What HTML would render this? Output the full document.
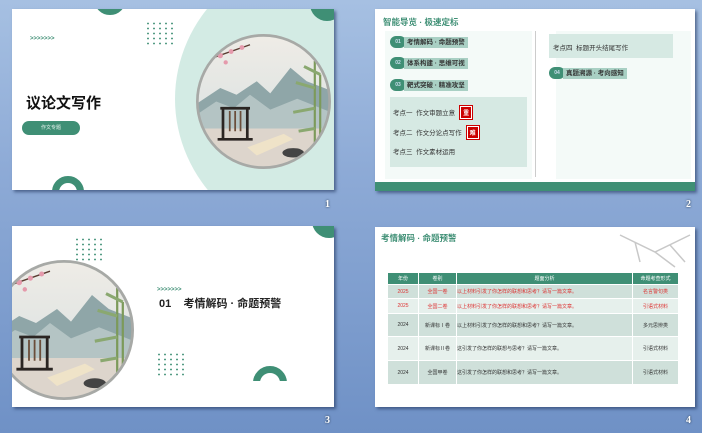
<!DOCTYPE html><html><head><meta charset="utf-8"><style>
*{margin:0;padding:0;box-sizing:border-box}
body{width:702px;height:433px;overflow:hidden;position:relative;background:linear-gradient(180deg,#a6c0e2 0%,#8daad6 40%,#6f91c6 100%);font-family:"Liberation Sans","Noto Sans CJK SC",sans-serif}
.s{position:absolute;background:#fff;overflow:hidden;box-shadow:2px 2px 3px rgba(30,50,90,.6)}
.a{position:absolute}
.n{position:absolute;color:#fff;font:bold 10px "Liberation Serif",serif;text-shadow:0 0 2px #234}
.arr{color:#3f8f75;font-size:6px;letter-spacing:0px;font-weight:bold}
.dots{background-image:radial-gradient(circle,#3f8f75 0.7px,transparent 1.1px);background-size:6px 5px}
.ring{border-radius:50%;border:7px solid #3f8f75}
.pill{display:flex;align-items:center;position:absolute}
.pill .c{width:16px;height:12px;border-radius:6px;background:#3f8f75;color:#cde;font-size:5px;line-height:12px;text-align:center;font-weight:bold}
.pill .t{background:#a9d0c4;font-size:6.5px;font-weight:bold;color:#333;padding:2px 3px;margin-left:-2px;height:11px;line-height:7px}
.kd{position:absolute;font-size:6.5px;color:#333}
.tag{display:inline-block;background:#c00;color:#fff;font-size:6px;padding:1px 2px;margin-left:5px;font-weight:bold;border:1px solid #fff;outline:1px solid #c00}
table{position:absolute;border-collapse:collapse;font-size:5px}
td{border:1px solid #fff;text-align:center;color:#333}
</style></head><body>
<svg width="0" height="0" style="position:absolute"><defs>
<clipPath id="cc"><circle cx="50" cy="50" r="49"/></clipPath>
<linearGradient id="sky" x1="0" y1="0" x2="0" y2="1"><stop offset="0" stop-color="#efece6"/><stop offset=".6" stop-color="#dfe4e3"/><stop offset="1" stop-color="#e2dcd3"/></linearGradient>
<symbol id="pt" viewBox="0 0 100 100"><g clip-path="url(#cc)">
<rect width="100" height="100" fill="url(#sky)"/>
<path d="M0 52 L18 40 L30 45 L45 35 L55 44 L70 25 L82 35 L100 42 L100 70 L0 70Z" fill="#8fa6a8"/>
<path d="M0 60 L15 50 L28 55 L40 45 L55 56 L75 48 L100 58 L100 75 L0 75Z" fill="#b4c4c4"/>
<rect y="70" width="100" height="30" fill="#ddd5cc"/>
<path d="M18 55 H40 M20 55 V78 M38 55 V78 M16 78 H42" stroke="#2b2522" stroke-width="2" fill="none"/>
<path d="M25 57V72M29 57V72M33 57V72" stroke="#6b4e3a" stroke-width="1.3"/>
<path d="M38 84 L65 74 L72 78 L45 90Z" fill="#efe3c8"/>
<ellipse cx="72" cy="88" rx="8" ry="3.5" fill="#444"/>
<path d="M0 22 Q20 15 40 8" stroke="#5a3b30" stroke-width="1" fill="none"/>
<g fill="#e59aac"><circle cx="10" cy="20" r="2"/><circle cx="18" cy="16" r="2"/><circle cx="26" cy="13" r="1.8"/><circle cx="34" cy="10" r="1.8"/><circle cx="6" cy="27" r="1.7"/><circle cx="22" cy="21" r="1.6"/></g>
<path d="M88 20 V85 M92 30 V85" stroke="#7c9a5a" stroke-width="1.6"/>
<path d="M88 40 L74 36 M88 55 L72 58 M92 30 L80 24 M88 70 L76 72" stroke="#8aa870" stroke-width="2.2"/>
</g><circle cx="50" cy="50" r="49" fill="none" stroke="#a7a9a6" stroke-width="2"/></symbol>
</defs></svg>

<!-- Slide 1 -->
<div class="s" style="left:12px;top:9px;width:322px;height:181px">
 <div class="a" style="left:163px;top:-60px;width:320px;height:300px;border-radius:50%;background:#d3ebe4"></div>
 <svg class="a" style="left:184px;top:25px" width="135" height="135"><use href="#pt"/></svg>
 <div class="a ring" style="left:82px;top:-26px;width:32px;height:32px"></div>
 <div class="a ring" style="left:298px;top:-22px;width:34px;height:34px;border:none;background:#3f8f75"></div>
 <div class="a ring" style="left:40px;top:167px;width:32px;height:32px"></div>
 <div class="a dots" style="left:133px;top:12px;width:30px;height:25px"></div>
 <div class="a arr" style="left:18px;top:27px">&gt;&gt;&gt;&gt;&gt;&gt;&gt;</div>
 <div class="a" style="left:14px;top:83px;font-size:15px;font-weight:bold;color:#111">议论文写作</div>
 <div class="a" style="left:10px;top:112px;width:58px;height:14px;border-radius:7px;background:#3f8f75;color:#e8f4ef;font-size:5px;line-height:14px;text-align:center">作文专题</div>
</div>
<div class="n" style="left:325px;top:199px">1</div>

<!-- Slide 2 -->
<div class="s" style="left:375px;top:9px;width:320px;height:182px">
 <div class="a" style="left:8px;top:7px;font-size:8.5px;font-weight:bold;color:#3f8f75">智能导览 · 极速定标</div>
 <div class="a" style="left:10px;top:22px;width:147px;height:148px;background:#f4faf8"></div>
 <div class="a" style="left:181px;top:22px;width:135px;height:148px;background:#f4faf8"></div>
 <div class="a" style="left:160px;top:22px;width:1px;height:146px;background:#ccc"></div>
 <div class="pill" style="left:15px;top:27px"><div class="c">01</div><div class="t">考情解码 · 命题预警</div></div>
 <div class="pill" style="left:15px;top:48px"><div class="c">02</div><div class="t">体系构建 · 思维可视</div></div>
 <div class="pill" style="left:15px;top:70px"><div class="c">03</div><div class="t">靶式突破 · 精准攻坚</div></div>
 <div class="a" style="left:15px;top:88px;width:137px;height:70px;background:#d6e9e3"></div>
 <div class="kd" style="left:18px;top:97px">考点一&nbsp;&nbsp;作文审题立意<span class="tag">重</span></div>
 <div class="kd" style="left:18px;top:117px">考点二&nbsp;&nbsp;作文分论点写作<span class="tag">难</span></div>
 <div class="kd" style="left:18px;top:137px">考点三&nbsp;&nbsp;作文素材运用</div>
 <div class="a" style="left:174px;top:25px;width:124px;height:24px;background:#d6e9e3"></div>
 <div class="kd" style="left:178px;top:33px">考点四&nbsp;&nbsp;标题开头结尾写作</div>
 <div class="pill" style="left:174px;top:58px"><div class="c">04</div><div class="t">真题溯源 · 考向感知</div></div>
 <div class="a" style="left:0;top:173px;width:320px;height:9px;background:#3f8f75"></div>
</div>
<div class="n" style="left:686px;top:199px">2</div>

<!-- Slide 3 -->
<div class="s" style="left:12px;top:226px;width:322px;height:181px">
 <svg class="a" style="left:-18px;top:34px" width="140" height="140"><use href="#pt"/></svg>
 <div class="a ring" style="left:300px;top:-22px;width:34px;height:34px;border:none;background:#3f8f75"></div>
 <div class="a dots" style="left:62px;top:11px;width:30px;height:25px"></div>
 <div class="a dots" style="left:144px;top:126px;width:30px;height:25px"></div>
 <div class="a" style="left:241px;top:140px;width:34px;height:34px;border-radius:50%;border:7px solid #3f8f75"></div>
 <div class="a" style="left:230px;top:155px;width:60px;height:30px;background:#fff"></div>
 <div class="a arr" style="left:145px;top:61px">&gt;&gt;&gt;&gt;&gt;&gt;&gt;</div>
 <div class="a" style="left:147px;top:69px;font-size:11px;font-weight:bold;color:#222">01&nbsp;&nbsp;&nbsp; 考情解码 · 命题预警</div>
</div>
<div class="n" style="left:325px;top:415px">3</div>

<!-- Slide 4 -->
<div class="s" style="left:375px;top:227px;width:320px;height:180px">
 <div class="a" style="left:6px;top:5px;font-size:8.5px;font-weight:bold;color:#3f8f75">考情解码 · 命题预警</div>
 <svg class="a" style="left:240px;top:0" width="80" height="45"><path d="M5 8 L40 25 L75 8 M40 25 L60 40 M20 15 L25 35 M55 18 L70 35" stroke="#c8c8c8" stroke-width="1.5" fill="none"/></svg>
 <table style="left:12px;top:45px;width:292px">
  <tr style="background:#3f8f75;height:12px"><td style="color:#fff;width:31px">年份</td><td style="color:#fff;width:38px">卷别</td><td style="color:#fff;width:176px">题面分析</td><td style="color:#fff">命题考查形式</td></tr>
  <tr style="background:#cfe0da;height:14px"><td style="color:#d33">2025</td><td style="color:#d33">全国一卷</td><td style="color:#d33;text-align:left">以上材料引发了你怎样的联想和思考？请写一篇文章。</td><td style="color:#d33">名言警句类</td></tr>
  <tr style="background:#e6f0ec;height:15px"><td style="color:#d33">2025</td><td style="color:#d33">全国二卷</td><td style="color:#d33;text-align:left">以上材料引发了你怎样的联想和思考？请写一篇文章。</td><td style="color:#d33">引语式材料</td></tr>
  <tr style="background:#cfe0da;height:23px"><td>2024</td><td>新课标Ⅰ卷</td><td style="text-align:left">以上材料引发了你怎样的联想和思考？请写一篇文章。</td><td>多元思辨类</td></tr>
  <tr style="background:#e6f0ec;height:24px"><td>2024</td><td>新课标Ⅱ卷</td><td style="text-align:left">这引发了你怎样的联想与思考？请写一篇文章。</td><td>引语式材料</td></tr>
  <tr style="background:#cfe0da;height:24px"><td>2024</td><td>全国甲卷</td><td style="text-align:left">这引发了你怎样的联想和思考？请写一篇文章。</td><td>引语式材料</td></tr>
 </table>
</div>
<div class="n" style="left:686px;top:415px">4</div>
</body></html>
